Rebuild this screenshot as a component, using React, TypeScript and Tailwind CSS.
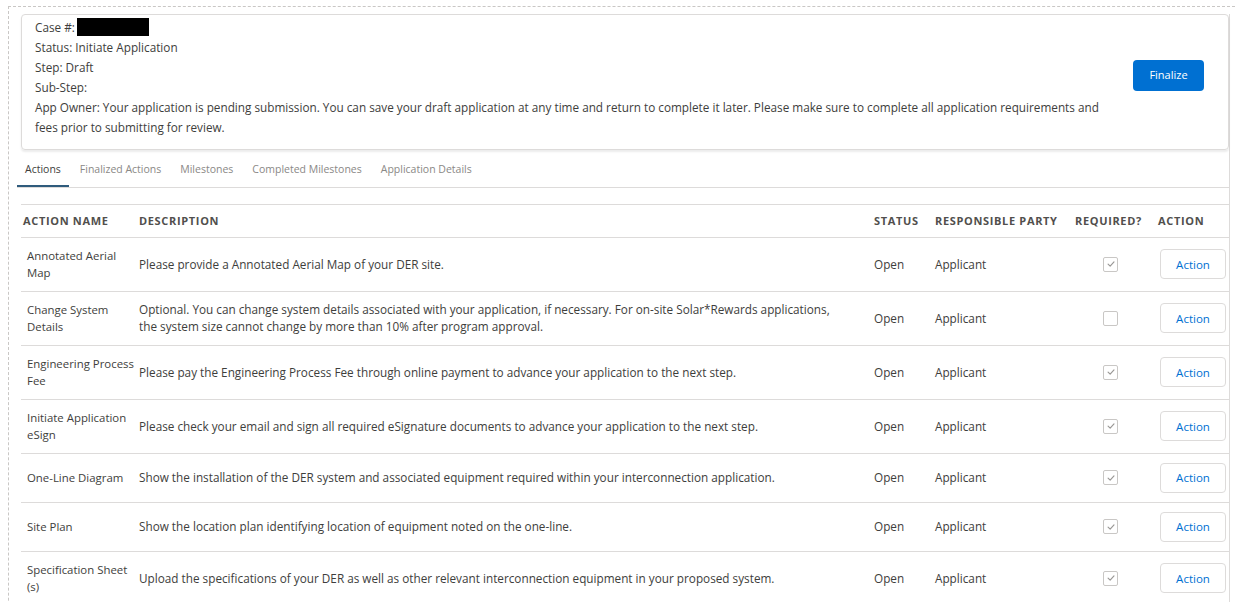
import { useState } from 'react';

type ActionRow = {
  name: string;
  description: string;
  status: string;
  party: string;
  required: boolean;
};

const rows: ActionRow[] = [
  {
    name: 'Annotated Aerial Map',
    description: 'Please provide a Annotated Aerial Map of your DER site.',
    status: 'Open',
    party: 'Applicant',
    required: true,
  },
  {
    name: 'Change System Details',
    description:
      'Optional. You can change system details associated with your application, if necessary. For on-site Solar*Rewards applications, the system size cannot change by more than 10% after program approval.',
    status: 'Open',
    party: 'Applicant',
    required: false,
  },
  {
    name: 'Engineering Process Fee',
    description:
      'Please pay the Engineering Process Fee through online payment to advance your application to the next step.',
    status: 'Open',
    party: 'Applicant',
    required: true,
  },
  {
    name: 'Initiate Application eSign',
    description:
      'Please check your email and sign all required eSignature documents to advance your application to the next step.',
    status: 'Open',
    party: 'Applicant',
    required: true,
  },
  {
    name: 'One-Line Diagram',
    description:
      'Show the installation of the DER system and associated equipment required within your interconnection application.',
    status: 'Open',
    party: 'Applicant',
    required: true,
  },
  {
    name: 'Site Plan',
    description: 'Show the location plan identifying location of equipment noted on the one-line.',
    status: 'Open',
    party: 'Applicant',
    required: true,
  },
  {
    name: 'Specification Sheet (s)',
    description:
      'Upload the specifications of your DER as well as other relevant interconnection equipment in your proposed system.',
    status: 'Open',
    party: 'Applicant',
    required: true,
  },
];

const tabs = ['Actions', 'Finalized Actions', 'Milestones', 'Completed Milestones', 'Application Details'];

const cols = 'grid grid-cols-[118px_735px_61px_140px_83px_1fr]';

function Checkbox({ checked }: { checked: boolean }) {
  return (
    <span className="flex h-[15px] w-[15px] items-center justify-center rounded-[2px] border border-[#c9c7c5] bg-white">
      {checked && (
        <svg viewBox="0 0 12 12" className="h-[10px] w-[10px]" fill="none">
          <path d="M2.5 6.2 5 8.6 9.6 3.4" stroke="#9a9896" strokeWidth="1.4" strokeLinecap="round" strokeLinejoin="round" />
        </svg>
      )}
    </span>
  );
}

export default function App() {
  const [active, setActive] = useState('Actions');

  return (
    <div className="h-[602px] w-[1235px] overflow-hidden bg-white font-['Open_Sans',sans-serif] text-[11.75px] text-[#3e3e3c]">
      <div className="ml-[8px] mt-[6px] h-[700px] border-l border-t border-dashed border-[#c9c7c5] pl-[12px] pr-[5px] pt-[7px]">
        <div className="border-r border-[#dddbda]">
          {/* Case summary card */}
          <div className="flex items-center rounded-[4px] border border-[#dddbda] pb-[12px] pl-[13px] pr-[24px] pt-[2px] shadow-[0_2px_2px_rgba(0,0,0,0.08)]">
            <div className="flex-1 leading-[20px]">
              <div className="flex items-center">
                Case #:
                <span className="ml-[2px] inline-block h-[18px] w-[72px] bg-black" />
              </div>
              <div>Status: Initiate Application</div>
              <div>Step: Draft</div>
              <div>Sub-Step:</div>
              <div className="max-w-[1075px]">
                App Owner: Your application is pending submission. You can save your draft application at any time and
                return to complete it later. Please make sure to complete all application requirements and fees prior to
                submitting for review.
              </div>
            </div>
            <button className="mb-[4px] h-[31px] w-[71px] rounded-[4px] bg-[#0070d2] text-[11px] text-white">
              Finalize
            </button>
          </div>

          {/* Tabs */}
          <div className="mt-[9px] flex gap-[3px] border-b border-[#dddbda] -ml-[4px]">
            {tabs.map((t) => (
              <button
                key={t}
                onClick={() => setActive(t)}
                className={
                  t === active
                    ? 'border-b-2 border-[#2f5b7c] px-[8px] pb-[7px] pt-[3px] text-[10.5px] text-[#3e3e3c]'
                    : 'border-b-2 border-transparent px-[8px] pb-[7px] pt-[3px] text-[10.5px] text-[#8a8886]'
                }
              >
                {t}
              </button>
            ))}
          </div>

          {/* Actions table */}
          <div className="mt-[16px] border-t border-[#dddbda]">
            <div className={`${cols} h-[33px] items-center border-b border-[#dddbda] text-[11px] font-bold tracking-[0.06em] text-[#514f4d]`}>
              <div className="pl-[2px]">ACTION NAME</div>
              <div>DESCRIPTION</div>
              <div>STATUS</div>
              <div>RESPONSIBLE PARTY</div>
              <div>REQUIRED?</div>
              <div>ACTION</div>
            </div>
            {rows.map((r) => (
              <div key={r.name} className={`${cols} min-h-[48px] items-center border-b border-[#dddbda] py-[9px] leading-[17.5px]`}>
                <div className="pl-[6px] pr-[3px] text-[11.4px]">{r.name}</div>
                <div className="pr-[30px]">{r.description}</div>
                <div>{r.status}</div>
                <div>{r.party}</div>
                <div className="pl-[28px]">
                  <Checkbox checked={r.required} />
                </div>
                <div className="pl-[2px]">
                  <button className="h-[30px] w-[66px] rounded-[4px] border border-[#dddbda] bg-white text-[11.5px] text-[#0070d2]">
                    Action
                  </button>
                </div>
              </div>
            ))}
          </div>
        </div>
      </div>
    </div>
  );
}
